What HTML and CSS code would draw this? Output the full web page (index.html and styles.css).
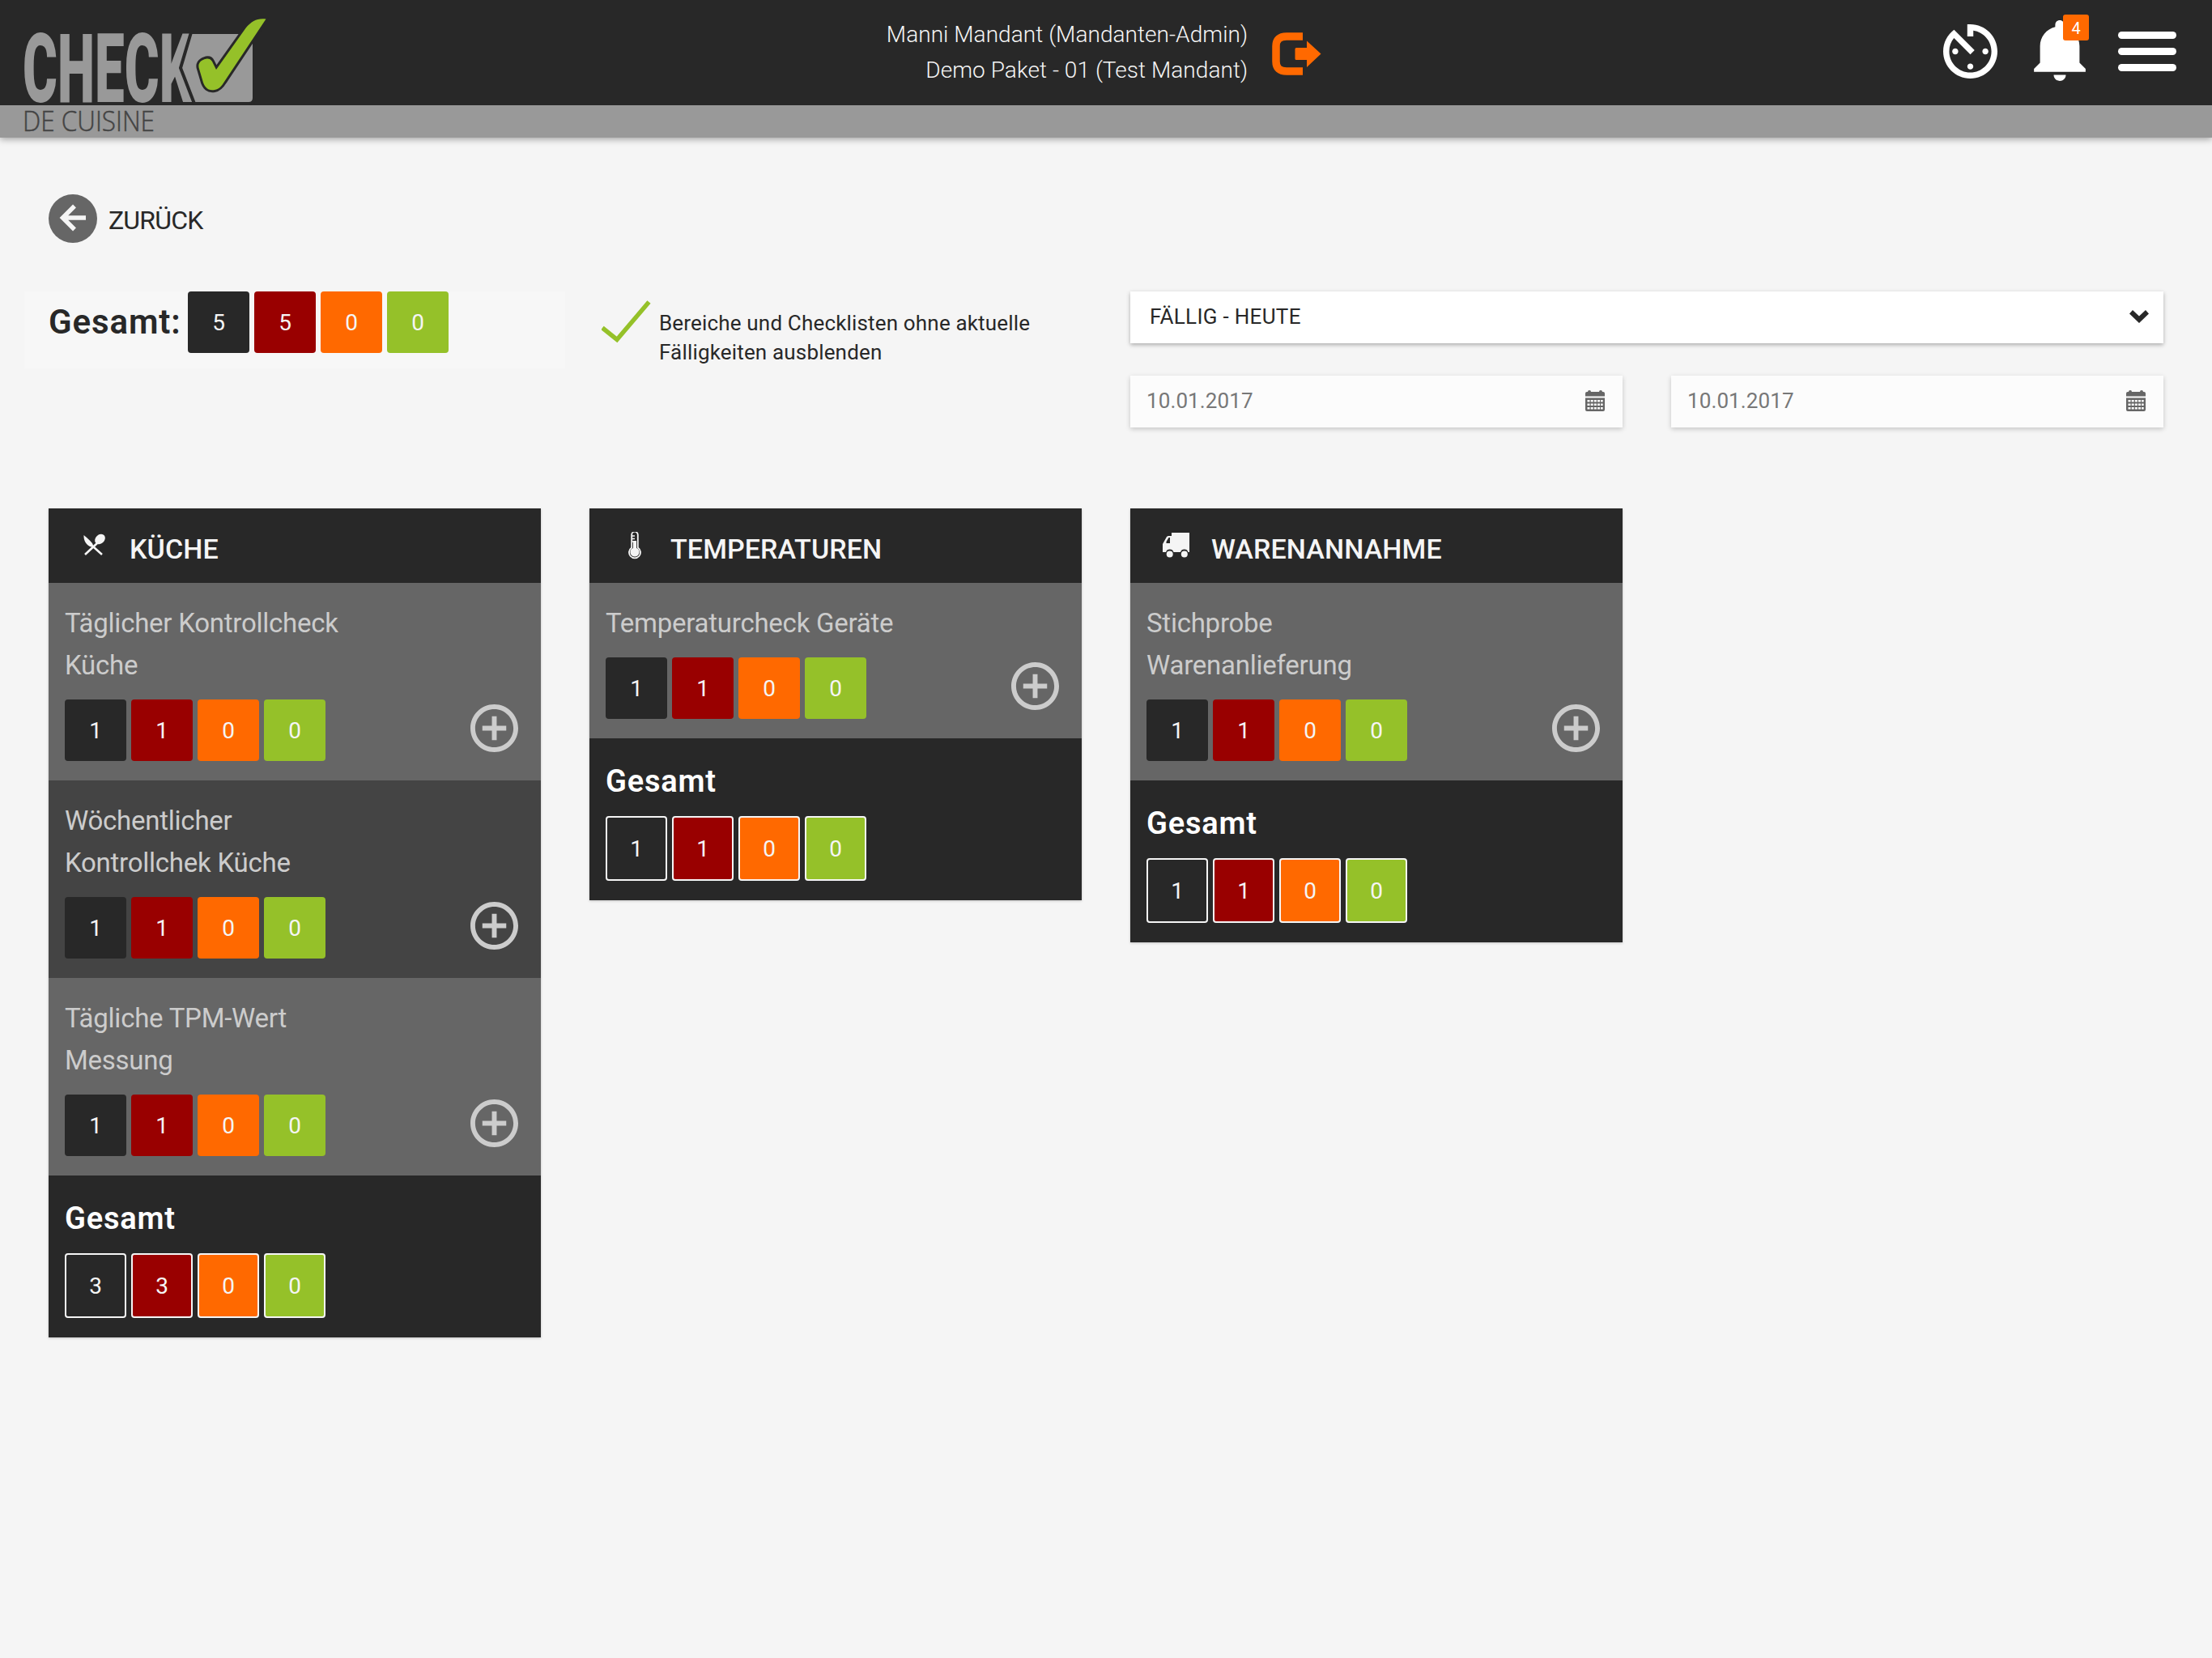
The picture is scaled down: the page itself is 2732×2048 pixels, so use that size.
FILE: index.html
```html
<!DOCTYPE html>
<html lang="de">
<head>
  <meta charset="UTF-8" />
  <meta name="viewport" content="width=device-width, initial-scale=1.0" />
  <title>Check de Cuisine</title>
  <link rel="stylesheet" href="styles.css">
</head>
<body>

  <!-- Icons -->
  <svg class="sprite" width="0" height="0">
    <symbol id="icon-plus" viewBox="2 2 20 20">
      <path d="M13 7h-2v4H7v2h4v4h2v-4h4v-2h-4V7zm-1-5C6.48 2 2 6.48 2 12s4.48 10 10 10 10-4.48 10-10S17.52 2 12 2zm0 18c-4.41 0-8-3.59-8-8s3.59-8 8-8 8 3.59 8 8-3.59 8-8 8z"/>
    </symbol>
    <symbol id="icon-calendar" viewBox="0 0 24 26">
      <path d="M0 7.500V4a2 2 0 0 1 2-2h1a2 2 0 0 1 4 0h10a2 2 0 0 1 4 0h1a2 2 0 0 1 2 2v3.500z"/>
      <path fill-rule="evenodd" d="M0 9.500h24V24a2 2 0 0 1-2 2H2a2 2 0 0 1-2-2zM2.500 12v2.500h3V12zM6.700 12v2.500h3V12zM10.900 12v2.500h3V12zM15 12v2.500h3V12zM19 12v2.500h2.700V12zM2.500 16.500v2.500h3v-2.500zM6.700 16.500v2.500h3v-2.500zM10.900 16.500v2.500h3v-2.500zM15 16.500v2.500h3v-2.500zM19 16.500v2.500h2.700v-2.500zM2.500 21v2.500h3V21zM6.700 21v2.500h3V21zM10.900 21v2.500h3V21zM15 21v2.500h3V21zM19 21v2.500h2.700V21z"/>
    </symbol>
  </svg>

  <header class="header">
    <svg class="logo" width="340" height="170" viewBox="0 0 340 170">
      <text class="logo-check" transform="translate(28 126) scale(.56 1)" textLength="376" lengthAdjust="spacingAndGlyphs">CHECK</text>
      <path fill="#999" stroke="#282828" stroke-width="4" d="M236 40H314V121Q314 128 307 128H240L223 84Z"/>
      <path class="logo-tick" d="M328.500 23.500C318 22 311 26 304 34L267 86L262 76C260 72 256 72 253 73C247 75 244 79 246 85L251 102C254 110 259 112 265 111C271 110 274 106 277 101Z"/>
      <text class="logo-sub" x="28" y="162" textLength="163" lengthAdjust="spacingAndGlyphs">DE CUISINE</text>
    </svg>

    <div class="user">
      <div class="user-info">
        <div>Manni Mandant (Mandanten-Admin)</div>
        <div>Demo Paket - 01 (Test Mandant)</div>
      </div>
      <svg class="logout" width="61" height="53" viewBox="0 0 61 53">
        <path fill="none" stroke="#ff6900" stroke-width="9.500" stroke-linejoin="round" d="M38 5H18Q5 5 5 17V36Q5 48 18 48H38"/>
        <path fill="#ff6900" d="M30 19h13v-8.500L60.500 26.500 43 43v-9H30a1.500 1.500 0 0 1-1.500-1.500v-12A1.500 1.500 0 0 1 30 19z"/>
      </svg>
    </div>

    <nav class="nav">
      <svg class="nav-timer" width="67" height="67" viewBox="3 3 18 18">
        <path d="M11 17c0 .55.45 1 1 1s1-.45 1-1-.45-1-1-1-1 .45-1 1zm0-14v4h2V5.080c3.390.490 6 3.390 6 6.920 0 3.870-3.130 7-7 7s-7-3.130-7-7c0-1.680.590-3.220 1.580-4.420L12 13l1.410-1.410-6.800-6.800v.020C4.420 6.450 3 9.050 3 12c0 4.970 4.020 9 9 9 4.970 0 9-4.030 9-9s-4.030-9-9-9h-1zm7 9c0-.55-.45-1-1-1s-1 .45-1 1 .45 1 1 1 1-.45 1-1zM6 12c0 .55.45 1 1 1s1-.45 1-1-.45-1-1-1-1 .45-1 1z"/>
      </svg>
      <div class="bell">
        <svg width="64" height="75" viewBox="3 2 17 20">
          <path d="M11.500 22c1.100 0 2-.9 2-2h-4c0 1.100.9 2 2 2zm6.500-6v-5.500c0-3.070-2.130-5.640-5-6.320V3.500c0-.83-.67-1.500-1.500-1.500S10 2.670 10 3.500v.680c-2.870.680-5 3.250-5 6.320V16l-2 2v1h17v-1l-2-2z"/>
        </svg>
        <span class="bell-count">4</span>
      </div>
      <div class="burger"><span></span><span></span><span></span></div>
    </nav>
  </header>

  <main class="main">
    <div class="back">
      <svg width="60" height="60" viewBox="0 0 60 60">
        <circle cx="30" cy="30" r="30" fill="#666"/>
        <path fill="none" stroke="#f5f5f5" stroke-width="5.500" d="M46 29H18M32 14.500L17.500 29L32 43.500"/>
      </svg>
      <span>ZURÜCK</span>
    </div>

    <div class="filters">
      <div class="summary">
        <h1>Gesamt:</h1>
        <div class="badges">
          <span class="badge black">5</span>
          <span class="badge red">5</span>
          <span class="badge orange">0</span>
          <span class="badge green">0</span>
        </div>
      </div>

      <div class="hide-option">
        <svg width="62" height="54" viewBox="0 0 62 54">
          <path fill="none" stroke="#95c129" stroke-width="5.500" d="M1 34L19 48.500L58.500 2"/>
        </svg>
        <p>Bereiche und Checklisten ohne aktuelle<br>Fälligkeiten ausblenden</p>
      </div>

      <div class="period">
        <div class="select">
          <span>FÄLLIG - HEUTE</span>
          <svg width="24" height="16" viewBox="0 0 24 16"><path d="M4 0l8 7.500L20 0l4 4.500L12 16 0 4.500z"/></svg>
        </div>
        <div class="date">
          <span>10.01.2017</span>
          <svg width="24" height="26"><use href="#icon-calendar"/></svg>
        </div>
        <div class="date">
          <span>10.01.2017</span>
          <svg width="24" height="26"><use href="#icon-calendar"/></svg>
        </div>
      </div>
    </div>

    <div class="cards">
      <section class="card">
        <h2>
          <svg class="card-icon" width="34" height="34" viewBox="0 0 34 34">
            <path d="M3.500 4C7 7 13 12 14.500 15C15 17 14 18.500 12.500 18.500C7 17 3 11 3.500 4z"/>
            <ellipse cx="23.500" cy="9" rx="5.500" ry="7" transform="rotate(48 23.500 9)"/>
            <path fill="none" stroke="#f5f5f5" stroke-width="2.600" d="M12 15.500L26 28M20 14L5 28"/>
          </svg>
          KÜCHE
        </h2>
        <div class="row">
          <p>Täglicher Kontrollcheck<br>Küche</p>
          <div class="row-bottom">
            <div class="badges">
              <span class="badge black">1</span>
              <span class="badge red">1</span>
              <span class="badge orange">0</span>
              <span class="badge green">0</span>
            </div>
            <svg class="plus" width="59" height="59"><use href="#icon-plus"/></svg>
          </div>
        </div>
        <div class="row dark">
          <p>Wöchentlicher<br>Kontrollchek Küche</p>
          <div class="row-bottom">
            <div class="badges">
              <span class="badge black">1</span>
              <span class="badge red">1</span>
              <span class="badge orange">0</span>
              <span class="badge green">0</span>
            </div>
            <svg class="plus" width="59" height="59"><use href="#icon-plus"/></svg>
          </div>
        </div>
        <div class="row">
          <p>Tägliche TPM-Wert<br>Messung</p>
          <div class="row-bottom">
            <div class="badges">
              <span class="badge black">1</span>
              <span class="badge red">1</span>
              <span class="badge orange">0</span>
              <span class="badge green">0</span>
            </div>
            <svg class="plus" width="59" height="59"><use href="#icon-plus"/></svg>
          </div>
        </div>
        <div class="total">
          <h3>Gesamt</h3>
          <div class="badges">
            <span class="badge black">3</span>
            <span class="badge red">3</span>
            <span class="badge orange">0</span>
            <span class="badge green">0</span>
          </div>
        </div>
      </section>

      <section class="card">
        <h2>
          <svg class="card-icon" width="34" height="34" viewBox="0 0 34 34">
            <path fill="none" stroke="#f5f5f5" stroke-width="1.800" d="M12.200 19.500V3.500a3.800 3.800 0 0 1 7.600 0V19.500a7 7 0 1 1-7.600 0z"/>
            <circle cx="16" cy="25" r="5.600"/>
            <path d="M14 11h4v10h-4z"/>
            <path fill="none" stroke="#f5f5f5" stroke-width="1.500" d="M12 5h4M12 8.500h4M12 12h4"/>
          </svg>
          TEMPERATUREN
        </h2>
        <div class="row">
          <p>Temperaturcheck Geräte</p>
          <div class="row-bottom">
            <div class="badges">
              <span class="badge black">1</span>
              <span class="badge red">1</span>
              <span class="badge orange">0</span>
              <span class="badge green">0</span>
            </div>
            <svg class="plus" width="59" height="59"><use href="#icon-plus"/></svg>
          </div>
        </div>
        <div class="total">
          <h3>Gesamt</h3>
          <div class="badges">
            <span class="badge black">1</span>
            <span class="badge red">1</span>
            <span class="badge orange">0</span>
            <span class="badge green">0</span>
          </div>
        </div>
      </section>

      <section class="card">
        <h2>
          <svg class="card-icon" width="34" height="34" viewBox="0 0 34 34">
            <path fill-rule="evenodd" d="M11 1H33V25H31.500A5 5 0 0 0 22 25H13.500A5 5 0 0 0 4 25H0V15L5 6Q6 5 7.500 5H11zM7.500 7L4.500 12V14H9V7z"/>
            <circle cx="8.700" cy="27.500" r="4"/>
            <circle cx="26.800" cy="27.500" r="4"/>
          </svg>
          WARENANNAHME
        </h2>
        <div class="row">
          <p>Stichprobe<br>Warenanlieferung</p>
          <div class="row-bottom">
            <div class="badges">
              <span class="badge black">1</span>
              <span class="badge red">1</span>
              <span class="badge orange">0</span>
              <span class="badge green">0</span>
            </div>
            <svg class="plus" width="59" height="59"><use href="#icon-plus"/></svg>
          </div>
        </div>
        <div class="total">
          <h3>Gesamt</h3>
          <div class="badges">
            <span class="badge black">1</span>
            <span class="badge red">1</span>
            <span class="badge orange">0</span>
            <span class="badge green">0</span>
          </div>
        </div>
      </section>
    </div>
  </main>

</body>
</html>
```
FILE: styles.css
```css
* {
  box-sizing: border-box;
}

body {
  font-family: Roboto, 'Liberation Sans', sans-serif;
  background-color: #f5f5f5;
  margin: 0;
  min-height: 2048px;
  color: #282828;
}

h1, h2, h3, p {
  margin: 0;
}

svg {
  display: block;
  flex-shrink: 0;
}
.sprite {
  position: absolute;
}

/* Header */
.header {
  display: grid;
  grid-template-columns: 1fr auto 1fr;
  height: 170px;
  background: linear-gradient(#282828 130px, #999 130px);
  box-shadow: 0 2px 8px rgba(0,0,0,0.35);
}

.logo {
  overflow: visible;
}
.logo-check {
  font-size: 118px;
  font-weight: 900;
  fill: #999;
}
.logo-tick {
  fill: #95c129;
  stroke: #282828;
  stroke-width: 6px;
  stroke-linejoin: round;
  paint-order: stroke;
}
.logo-sub {
  font-family: 'Open Sans', sans-serif;
  font-size: 35px;
  font-weight: 300;
  fill: #444;
  stroke: #444;
  stroke-width: 0.5px;
}

.user {
  display: flex;
  align-items: flex-start;
  gap: 30px;
  padding: 21px 5px 0 0;
}
.user-info {
  font-size: 28px;
  font-weight: 300;
  line-height: 44px;
  letter-spacing: 0.05px;
  text-align: right;
  color: #f5f5f5;
}
.logout {
  margin-top: 19px;
}

.nav {
  display: flex;
  justify-content: flex-end;
  align-items: flex-start;
  padding: 25px 44px 0 0;
  fill: #fff;
}
.nav-timer {
  margin: 5px 45px 0 0;
}
.bell {
  position: relative;
  margin-right: 40px;
}
.bell-count {
  position: absolute;
  top: -7px;
  left: 36px;
  width: 32px;
  height: 32px;
  border-radius: 3px;
  background-color: #ff6900;
  color: #fff;
  font-size: 20px;
  line-height: 34px;
  text-align: center;
}
.burger {
  width: 72px;
  display: flex;
  flex-direction: column;
  gap: 11px;
  margin-top: 14px;
}
.burger span {
  height: 9px;
  border-radius: 5px;
  background-color: #fff;
}

/* Inhalt */
.main {
  padding: 70px 60px 0;
}

.back {
  display: flex;
  align-items: center;
  gap: 14px;
  height: 60px;
  font-size: 32px;
  letter-spacing: -0.8px;
}
.back span {
  padding-top: 3px;
}

.filters {
  display: grid;
  grid-template-columns: 608px 608px 1fr;
  column-gap: 60px;
  align-items: start;
  height: 268px;
  margin-top: 60px;
}

.summary {
  display: flex;
  height: 95px;
  margin: 0 -30px;
  padding-left: 30px;
  background-color: #f7f7f7;
}
.summary h1 {
  width: 172px;
  font-size: 42px;
  font-weight: 600;
  line-height: 75px;
  letter-spacing: 0.9px;
}

.badges {
  display: flex;
  gap: 6px;
}
.badge {
  width: 76px;
  height: 76px;
  border-radius: 4px;
  color: #f5f5f5;
  font-size: 28px;
  line-height: 77px;
  text-align: center;
}
.black {
  background-color: #282828;
}
.red {
  background-color: #990000;
}
.orange {
  background-color: #ff6900;
}
.green {
  background-color: #95c129;
}

.hide-option {
  display: flex;
  gap: 9px;
  padding: 11px 0 0 15px;
}
.hide-option p {
  padding-top: 10px;
  font-size: 26px;
  line-height: 36px;
  letter-spacing: 0.17px;
  white-space: nowrap;
}

.period {
  display: grid;
  grid-template-columns: 1fr 1fr;
  gap: 40px 60px;
}
.select, .date {
  display: flex;
  align-items: center;
  justify-content: space-between;
  height: 64px;
  padding-bottom: 2px;
  font-size: 26px;
}
.select {
  grid-column: span 2;
  padding: 0 18px 2px 24px;
  background-color: #fff;
  letter-spacing: 0.3px;
  fill: #282828;
  box-shadow: 0 2px 5px rgba(0,0,0,0.3);
}
.date {
  padding: 0 22px 2px 20px;
  background-color: #fcfcfc;
  color: #777;
  fill: #666;
  letter-spacing: 0.1px;
  box-shadow: 0 2px 6px rgba(0,0,0,0.2);
}

/* Karten */
.cards {
  display: grid;
  grid-template-columns: repeat(4, 608px);
  gap: 60px;
  align-items: start;
}
.card {
  background-color: #282828;
  color: #f5f5f5;
  fill: #f5f5f5;
  box-shadow: 0 1px 3px rgba(0,0,0,0.2);
}
.card h2 {
  display: flex;
  align-items: center;
  height: 92px;
  padding: 8px 0 0 40px;
  font-size: 34px;
  font-weight: 500;
  letter-spacing: 0.1px;
}
.card-icon {
  margin: -8px 26px 0 0;
}

.row {
  padding: 24px 20px;
  background-color: #666;
}
.row.dark {
  background-color: #444;
}
.row p {
  margin-bottom: 16px;
  font-size: 33px;
  line-height: 52px;
  letter-spacing: -0.25px;
  color: #ccc;
}
.row-bottom {
  display: flex;
  justify-content: space-between;
}
.plus {
  margin: 6px 8px 0 0;
  fill: #ccc;
}

.total {
  padding: 24px 20px;
}
.total h3 {
  padding-top: 1px;
  margin-bottom: 15px;
  font-size: 38px;
  font-weight: 600;
  line-height: 56px;
  letter-spacing: 0.8px;
  color: #fff;
}
.total .badge {
  height: 80px;
  border: 2px solid #f5f5f5;
}
```
